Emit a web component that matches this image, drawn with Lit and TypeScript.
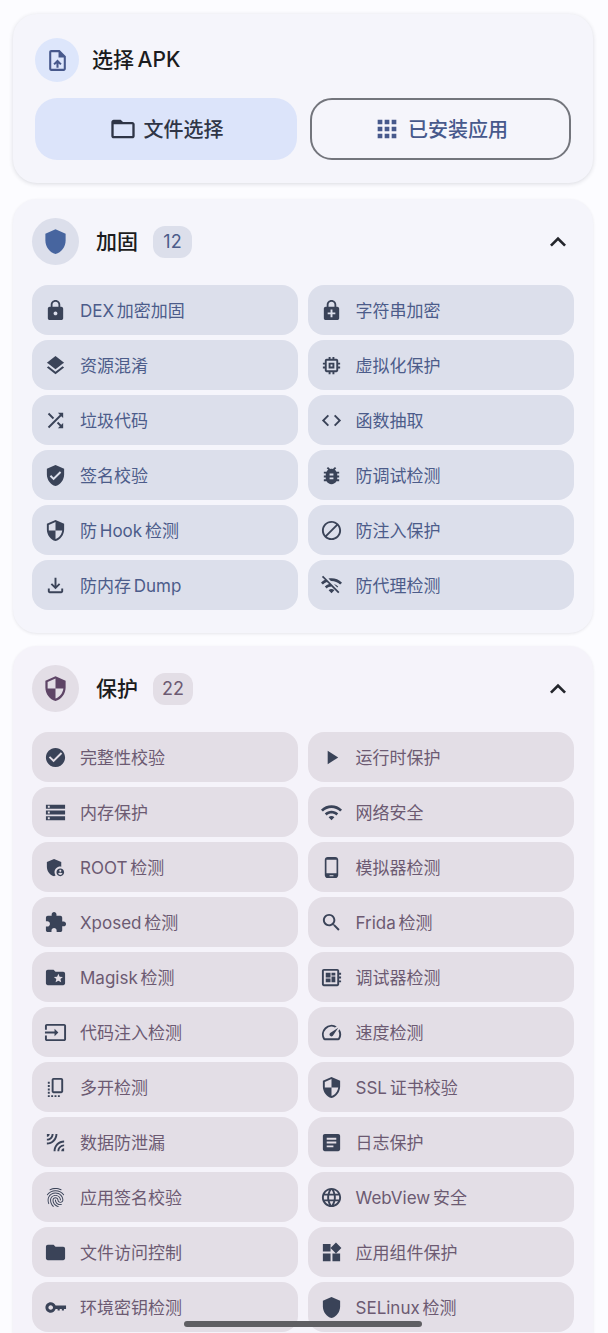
import { LitElement, html, css } from 'lit';
import { customElement } from 'lit/decorators.js';

const icons: Record<string, string> = {
  uploadFile: 'M14 2H6c-1.1 0-1.99.9-1.99 2L4 20c0 1.1.89 2 1.99 2H18c1.1 0 2-.9 2-2V8l-6-6zm4 18H6V4h7v5h5v11zM8 15.01l1.41 1.41L11 14.84V19h2v-4.16l1.59 1.59L16 15.01 12.01 11 8 15.01z',
  folderOpen: 'M20 6h-8l-2-2H4c-1.1 0-1.99.9-1.99 2L2 18c0 1.1.9 2 2 2h16c1.1 0 2-.9 2-2V8c0-1.1-.9-2-2-2zm0 12H4V8h16v10z',
  apps: 'M4 8h4V4H4v4zm6 12h4v-4h-4v4zm-6 0h4v-4H4v4zm0-6h4v-4H4v4zm6 0h4v-4h-4v4zm6-10v4h4V4h-4zm-6 4h4V4h-4v4zm6 6h4v-4h-4v4zm0 6h4v-4h-4v4z',
  shield: 'M12 1L3 5v6c0 5.55 3.84 10.74 9 12 5.16-1.26 9-6.45 9-12V5l-9-4z',
  security: 'M12 1L3 5v6c0 5.55 3.84 10.74 9 12 5.16-1.26 9-6.45 9-12V5l-9-4zm0 10.99h7c-.53 4.12-3.28 7.79-7 8.94V12H5V6.3l7-3.11v8.8z',
  expandLess: 'M12 8l-6 6 1.41 1.41L12 10.83l4.59 4.58L18 14z',
  lock: 'M18 8h-1V6c0-2.76-2.24-5-5-5S7 3.24 7 6v2H6c-1.1 0-2 .9-2 2v10c0 1.1.9 2 2 2h12c1.1 0 2-.9 2-2V10c0-1.1-.9-2-2-2zm-6 9c-1.1 0-2-.9-2-2s.9-2 2-2 2 .9 2 2-.9 2-2 2zm3.1-9H8.9V6c0-1.71 1.39-3.1 3.1-3.1 1.71 0 3.1 1.39 3.1 3.1v2z',
  encryption: 'M18 8h-1V6c0-2.76-2.24-5-5-5S7 3.24 7 6v2H6c-1.1 0-2 .9-2 2v10c0 1.1.9 2 2 2h12c1.1 0 2-.9 2-2V10c0-1.1-.9-2-2-2zM8.9 6c0-1.71 1.39-3.1 3.1-3.1s3.1 1.39 3.1 3.1v2H8.9V6zM16 16h-3v3h-2v-3H8v-2h3v-3h2v3h3v2z',
  layers: 'M11.99 18.54l-7.37-5.73L3 14.07l9 7 9-7-1.63-1.27-7.38 5.74zM12 16l7.36-5.73L21 9l-9-7-9 7 1.63 1.27L12 16z',
  memory: 'M15 9H9v6h6V9zm-2 4h-2v-2h2v2zm8-2V9h-2V7c0-1.1-.9-2-2-2h-2V3h-2v2h-2V3H9v2H7c-1.1 0-2 .9-2 2v2H3v2h2v2H3v2h2v2c0 1.1.9 2 2 2h2v2h2v-2h2v2h2v-2h2c1.1 0 2-.9 2-2v-2h2v-2h-2v-2h2zm-4 6H7V7h10v10z',
  shuffle: 'M10.59 9.17L5.41 4 4 5.41l5.17 5.17 1.42-1.41zM14.5 4l2.04 2.04L4 18.59 5.41 20 17.96 7.46 20 9.5V4h-5.5zm.33 9.41l-1.41 1.41 3.13 3.13L14.5 20H20v-5.5l-2.04 2.04-3.13-3.13z',
  code: 'M9.4 16.6L4.8 12l4.6-4.6L8 6l-6 6 6 6 1.4-1.4zm5.2 0l4.6-4.6-4.6-4.6L16 6l6 6-6 6-1.4-1.4z',
  verified: 'M12 1L3 5v6c0 5.55 3.84 10.74 9 12 5.16-1.26 9-6.45 9-12V5l-9-4zm-2 16l-4-4 1.41-1.41L10 14.17l6.59-6.59L18 9l-8 8z',
  bug: 'M20 8h-2.81c-.45-.78-1.07-1.45-1.82-1.96L17 4.41 15.59 3l-2.17 2.17C12.96 5.06 12.49 5 12 5c-.49 0-.96.06-1.41.17L8.41 3 7 4.41l1.62 1.63C7.88 6.55 7.26 7.22 6.81 8H4v2h2.09c-.05.33-.09.66-.09 1v1H4v2h2v1c0 .34.04.67.09 1H4v2h2.81c1.04 1.79 2.97 3 5.19 3s4.15-1.21 5.19-3H20v-2h-2.09c.05-.33.09-.66.09-1v-1h2v-2h-2v-1c0-.34-.04-.67-.09-1H20V8zm-6 8h-4v-2h4v2zm0-4h-4v-2h4v2z',
  block: 'M12 2C6.48 2 2 6.48 2 12s4.48 10 10 10 10-4.48 10-10S17.52 2 12 2zM4 12c0-4.42 3.58-8 8-8 1.85 0 3.55.63 4.9 1.69L5.69 16.9C4.63 15.55 4 13.85 4 12zm8 8c-1.85 0-3.55-.63-4.9-1.69L18.31 7.1C19.37 8.45 20 10.15 20 12c0 4.42-3.58 8-8 8z',
  download: 'M18 15v3H6v-3H4v3c0 1.1.9 2 2 2h12c1.1 0 2-.9 2-2v-3h-2zm-1-4l-1.41-1.41L13 12.17V4h-2v8.17L8.41 9.59 7 11l5 5 5-5z',
  wifiOff: 'M22.99 9C19.15 5.16 13.8 3.76 8.84 4.78l2.52 2.52c3.47-.17 6.99 1.05 9.64 3.7l2-2zm-4 4c-1.29-1.29-2.84-2.13-4.49-2.56l3.53 3.53.96-.97zM2 3.05L5.07 6.1C3.6 6.82 2.22 7.78 1 9l1.99 2c1.24-1.24 2.67-2.16 4.2-2.77l2.24 2.24C7.81 10.89 6.27 11.73 5 13v.01L6.99 15c1.36-1.36 3.14-2.04 4.92-2.06L18.98 20l1.27-1.26L3.29 1.79 2 3.05zM9 17l3 3 3-3c-1.65-1.66-4.34-1.66-6 0z',
  checkCircle: 'M12 2C6.48 2 2 6.48 2 12s4.48 10 10 10 10-4.48 10-10S17.52 2 12 2zm-2 15l-5-5 1.41-1.41L10 14.17l7.59-7.59L19 8l-9 9z',
  play: 'M8 5v14l11-7z',
  storage: 'M2 20h20v-4H2v4zm2-3h2v2H4v-2zM2 4v4h20V4H2zm4 3H4V5h2v2zm-4 7h20v-4H2v4zm2-3h2v2H4v-2z',
  wifi: 'M1 9l2 2c4.97-4.97 13.03-4.97 18 0l2-2C16.93 2.93 7.08 2.93 1 9zm8 8l3 3 3-3c-1.65-1.66-4.34-1.66-6 0zm-4-4l2 2c2.76-2.76 7.24-2.76 10 0l2-2C15.14 9.14 8.87 9.14 5 13z',
  admin: 'M17 11c.34 0 .67.04 1 .09V6.27L10.5 3 3 6.27v4.91c0 4.54 3.2 8.79 7.5 9.82.55-.13 1.08-.32 1.6-.55-.69-.98-1.1-2.17-1.1-3.45 0-3.31 2.69-6 6-6zM17 13c-2.21 0-4 1.79-4 4s1.79 4 4 4 4-1.79 4-4-1.79-4-4-4zm0 1.38c.62 0 1.12.51 1.12 1.12s-.51 1.12-1.12 1.12-1.12-.51-1.12-1.12.5-1.12 1.12-1.12zm0 5.37c-.93 0-1.74-.46-2.24-1.17.05-.72 1.51-1.08 2.24-1.08s2.19.36 2.24 1.08c-.5.71-1.31 1.17-2.24 1.17z',
  phone: 'M16 1H8C6.34 1 5 2.34 5 4v16c0 1.66 1.34 3 3 3h8c1.66 0 3-1.34 3-3V4c0-1.66-1.34-3-3-3zm-2 20h-4v-1h4v1zm3.25-3H6.75V4h10.5v14z',
  extension: 'M20.5 11H19V7c0-1.1-.9-2-2-2h-4V3.5C13 2.12 11.88 1 10.5 1S8 2.12 8 3.5V5H4c-1.1 0-1.99.9-1.99 2v3.8H3.5c1.49 0 2.7 1.21 2.7 2.7s-1.21 2.7-2.7 2.7H2V20c0 1.1.9 2 2 2h3.8v-1.5c0-1.49 1.21-2.7 2.7-2.7 1.49 0 2.7 1.21 2.7 2.7V22H17c1.1 0 2-.9 2-2v-4h1.5c1.38 0 2.5-1.12 2.5-2.5S21.88 11 20.5 11z',
  search: 'M15.5 14h-.79l-.28-.27C15.41 12.59 16 11.11 16 9.5 16 5.91 13.09 3 9.5 3S3 5.91 3 9.5 5.91 16 9.5 16c1.61 0 3.09-.59 4.23-1.57l.27.28v.79l5 4.99L20.49 19l-4.99-5zm-6 0C7.01 14 5 11.99 5 9.5S7.01 5 9.5 5 14 7.01 14 9.5 11.99 14 9.5 14z',
  folderSpecial: 'M20 6h-8l-2-2H4c-1.1 0-1.99.9-1.99 2L2 18c0 1.1.9 2 2 2h16c1.1 0 2-.9 2-2V8c0-1.1-.9-2-2-2zm-2.06 11L15 15.28 12.06 17l.78-3.33-2.59-2.24 3.41-.29L15 8l1.34 3.14 3.41.29-2.59 2.24.78 3.33z',
  board: 'M22 9V7h-2V5c0-1.1-.9-2-2-2H4c-1.1 0-2 .9-2 2v14c0 1.1.9 2 2 2h14c1.1 0 2-.9 2-2v-2h2v-2h-2v-2h2v-2h-2V9h2zm-4 10H4V5h14v14zM6 13h5v4H6zm6-6h4v3h-4zM6 7h5v5H6zm6 4h4v6h-4z',
  input: 'M21 3.01H3c-1.1 0-2 .9-2 2V9h2V4.99h18v14.03H3V15H1v4.01c0 1.1.9 1.98 2 1.98h18c1.1 0 2-.88 2-1.98v-14c0-1.11-.9-2-2-2zM11 16l4-4-4-4v3H1v2h10v3z',
  speed: 'M20.38 8.57l-1.23 1.85a8 8 0 0 1-.22 7.58H5.07A8 8 0 0 1 15.58 6.85l1.85-1.23A10 10 0 0 0 3.35 19a2 2 0 0 0 1.72 1h13.85a2 2 0 0 0 1.74-1 10 10 0 0 0-.27-10.44zm-9.79 6.84a2 2 0 0 0 2.83 0l5.66-8.49-8.49 5.66a2 2 0 0 0 0 2.83z',
  // portrait frame with a dotted edge left and below
  multi: 'M10 2h8c1.1 0 2 .9 2 2v12c0 1.1-.9 2-2 2h-8c-1.1 0-2-.9-2-2V4c0-1.1.9-2 2-2zm0 2v12h8V4h-8zM4 6h2v2H4zm0 3.5h2v2H4zm0 3.5h2v2H4zm0 3.5h2v2H4zM4 20h2v2H4zm3.5 0h2v2h-2zm3.5 0h2v2h-2zm3.5 0h2v2h-2z',
  leak: 'M6 3H3v3c1.66 0 3-1.34 3-3zm8 0h-2c0 4.97-4.03 9-9 9v2c6.08 0 11-4.93 11-11zm-4 0H8c0 2.76-2.24 5-5 5v2c3.87 0 7-3.13 7-7zm0 18h2c0-4.97 4.03-9 9-9v-2c-6.07 0-11 4.93-11 11zm8 0h3v-3c-1.66 0-3 1.34-3 3zm-4 0h2c0-2.76 2.24-5 5-5v-2c-3.87 0-7 3.13-7 7z',
  article: 'M19 3H5c-1.1 0-2 .9-2 2v14c0 1.1.9 2 2 2h14c1.1 0 2-.9 2-2V5c0-1.1-.9-2-2-2zm-5 14H7v-2h7v2zm3-4H7v-2h10v2zm0-4H7V7h10v2z',
  fingerprint: 'M17.81 4.47c-.08 0-.16-.02-.23-.06C15.66 3.42 14 3 12.01 3c-1.98 0-3.86.47-5.57 1.41-.24.13-.54.04-.68-.2-.13-.24-.04-.55.2-.68C7.82 2.52 9.86 2 12.01 2c2.13 0 3.99.47 6.03 1.52.25.13.34.43.21.67-.09.18-.26.28-.44.28zM3.5 9.72c-.1 0-.2-.03-.29-.09-.23-.16-.28-.47-.12-.7.99-1.4 2.25-2.5 3.75-3.27C9.98 4.04 14 4.03 17.15 5.65c1.5.77 2.76 1.86 3.75 3.25.16.22.11.54-.12.7-.23.16-.54.11-.7-.12-.9-1.26-2.04-2.25-3.39-2.94-2.87-1.47-6.54-1.47-9.4.01-1.36.7-2.5 1.7-3.4 2.96-.08.14-.23.21-.39.21zm6.25 12.07c-.13 0-.26-.05-.35-.15-.87-.87-1.34-1.43-2.01-2.64-.69-1.23-1.05-2.73-1.05-4.34 0-2.97 2.54-5.39 5.66-5.39s5.66 2.42 5.66 5.39c0 .28-.22.5-.5.5s-.5-.22-.5-.5c0-2.42-2.09-4.39-4.66-4.39-2.57 0-4.66 1.97-4.66 4.39 0 1.44.32 2.77.93 3.85.64 1.15 1.08 1.64 1.85 2.42.19.2.19.51 0 .71-.11.1-.24.15-.37.15zm7.17-1.85c-1.19 0-2.24-.3-3.1-.89-1.49-1.01-2.38-2.65-2.38-4.39 0-.28.22-.5.5-.5s.5.22.5.5c0 1.41.72 2.74 1.94 3.56.71.48 1.54.71 2.54.71.24 0 .64-.03 1.04-.1.27-.05.53.13.58.41.05.27-.13.53-.41.58-.57.11-1.07.12-1.21.12zM14.91 22c-.04 0-.09-.01-.13-.02-1.59-.44-2.63-1.03-3.72-2.1-1.4-1.39-2.17-3.24-2.17-5.22 0-1.62 1.38-2.94 3.08-2.94 1.7 0 3.08 1.32 3.08 2.94 0 1.07.93 1.94 2.08 1.94s2.08-.87 2.08-1.94c0-3.77-3.25-6.83-7.25-6.83-2.84 0-5.44 1.58-6.61 4.03-.39.81-.59 1.76-.59 2.8 0 .78.07 2.01.67 3.61.1.26-.03.55-.29.64-.26.1-.55-.04-.64-.29-.49-1.31-.73-2.61-.73-3.96 0-1.2.23-2.29.68-3.24 1.33-2.79 4.28-4.6 7.51-4.6 4.55 0 8.25 3.51 8.25 7.83 0 1.62-1.38 2.94-3.08 2.94s-3.08-1.32-3.08-2.94c0-1.07-.93-1.94-2.08-1.94s-2.08.87-2.08 1.94c0 1.71.66 3.31 1.87 4.51.95.94 1.86 1.46 3.27 1.85.27.07.42.35.35.61-.05.23-.26.38-.47.38z',
  language: 'M11.99 2C6.47 2 2 6.48 2 12s4.47 10 9.99 10C17.52 22 22 17.52 22 12S17.52 2 11.99 2zm6.93 6h-2.95c-.32-1.25-.78-2.45-1.38-3.56 1.84.63 3.37 1.91 4.33 3.56zM12 4.04c.83 1.2 1.48 2.53 1.91 3.96h-3.82c.43-1.43 1.08-2.76 1.91-3.96zM4.26 14C4.1 13.36 4 12.69 4 12s.1-1.36.26-2h3.38c-.08.66-.14 1.32-.14 2 0 .68.06 1.34.14 2H4.26zm.82 2h2.95c.32 1.25.78 2.45 1.38 3.56-1.84-.63-3.37-1.9-4.33-3.56zm2.95-8H5.08c.96-1.66 2.49-2.93 4.33-3.56C8.81 5.55 8.35 6.75 8.03 8zM12 19.96c-.83-1.2-1.48-2.53-1.91-3.96h3.82c-.43 1.43-1.08 2.76-1.91 3.96zM14.34 14H9.66c-.09-.66-.16-1.32-.16-2 0-.68.07-1.35.16-2h4.68c.09.65.16 1.32.16 2 0 .68-.07 1.34-.16 2zm.25 5.56c.6-1.11 1.06-2.31 1.38-3.56h2.95c-.96 1.65-2.49 2.93-4.33 3.56zM16.36 14c.08-.66.14-1.32.14-2 0-.68-.06-1.34-.14-2h3.38c.16.64.26 1.31.26 2s-.1 1.36-.26 2h-3.38z',
  folder: 'M10 4H4c-1.1 0-1.99.9-1.99 2L2 18c0 1.1.9 2 2 2h16c1.1 0 2-.9 2-2V8c0-1.1-.9-2-2-2h-8l-2-2z',
  widgets: 'M13 13v8h8v-8h-8zM3 21h8v-8H3v8zM3 3v8h8V3H3zm13.66-1.31L11 7.34 16.66 13l5.66-5.66-5.66-5.65z',
  // open ring with a thin shaft, slimmer than vpn_key
  key: 'M7 6.5c2.4 0 4.4 1.5 5.1 3.5H23v3.6h-2.2V15h-2.2v-1.4h-2.2V15h-2.2v-1.4h-2.1c-.8 2.2-2.8 3.9-5.1 3.9-3 0-5.5-2.5-5.5-5.5S4 6.500 7 6.500zm0 3.1c-1.3 0-2.400 1.100-2.400 2.400s1.100 2.400 2.400 2.400 2.400-1.100 2.400-2.400-1.100-2.400-2.400-2.400z',
};

const hardening: [string, string][] = [
  ['lock', 'DEX 加密加固'], ['encryption', '字符串加密'],
  ['layers', '资源混淆'], ['memory', '虚拟化保护'],
  ['shuffle', '垃圾代码'], ['code', '函数抽取'],
  ['verified', '签名校验'], ['bug', '防调试检测'],
  ['security', '防 Hook 检测'], ['block', '防注入保护'],
  ['download', '防内存 Dump'], ['wifiOff', '防代理检测'],
];

const protection: [string, string][] = [
  ['checkCircle', '完整性校验'], ['play', '运行时保护'],
  ['storage', '内存保护'], ['wifi', '网络安全'],
  ['admin', 'ROOT 检测'], ['phone', '模拟器检测'],
  ['extension', 'Xposed 检测'], ['search', 'Frida 检测'],
  ['folderSpecial', 'Magisk 检测'], ['board', '调试器检测'],
  ['input', '代码注入检测'], ['speed', '速度检测'],
  ['multi', '多开检测'], ['security', 'SSL 证书校验'],
  ['leak', '数据防泄漏'], ['article', '日志保护'],
  ['fingerprint', '应用签名校验'], ['language', 'WebView 安全'],
  ['folder', '文件访问控制'], ['widgets', '应用组件保护'],
  ['key', '环境密钥检测'], ['shield', 'SELinux 检测'],
];

const icon = (name: string) => html`<svg viewBox="0 0 24 24"><path d=${icons[name]}></path></svg>`;

@customElement('app-root')
export class AppRoot extends LitElement {
  static styles = css`
    :host {
      display: block;
      position: relative;
      height: 1333px;
      overflow: hidden;
      box-sizing: border-box;
      padding: 14px 15px 0 13px;
      background: #fcfcff;
      font-family: Inter, 'Noto Sans CJK SC', sans-serif;
      word-spacing: -2px;
      color: #1b1c20;
    }

    svg {
      display: block;
      width: 24px;
      height: 24px;
      fill: currentColor;
      flex: none;
    }

    .card {
      background: #f5f5fb;
      border-radius: 24px;
      box-shadow: 0 1px 4px rgba(40, 44, 60, 0.16);
    }

    .pick {
      padding: 24px 22px 23px;
      margin-bottom: 16px;
    }

    .pick-head {
      display: flex;
      align-items: center;
      gap: 13px;
      margin-bottom: 16px;
    }

    .pick-icon {
      width: 44px;
      height: 44px;
      border-radius: 50%;
      background: #dde6fb;
      color: #47598c;
      display: flex;
      align-items: center;
      justify-content: center;
    }

    .pick-icon svg {
      width: 25px;
      height: 25px;
    }

    .title {
      font-size: 21px;
      font-weight: 500;
      line-height: 28px;
    }

    .buttons {
      display: grid;
      grid-template-columns: 262px 261px;
      gap: 13px;
    }

    .btn {
      height: 62px;
      box-sizing: border-box;
      border-radius: 22px;
      display: flex;
      align-items: center;
      justify-content: center;
      gap: 7px;
      font-size: 20px;
      font-weight: 500;
    }

    .btn span {
      padding-bottom: 2px;
    }

    .btn svg {
      width: 28px;
      height: 28px;
    }

    .btn.primary {
      background: #dce4fa;
      color: #2f3546;
    }

    .btn.outline {
      border: 2px solid #73757c;
      color: #47598c;
    }

    .section {
      padding: 19px 19px 23px;
      margin-bottom: 13px;
      box-shadow: 0 1px 3px rgba(40, 44, 60, 0.1);
    }

    .section.rose {
      background: #f5f3fa;
    }

    .section-head {
      display: flex;
      align-items: center;
      height: 47px;
      margin-bottom: 20px;
    }

    .section-icon {
      width: 47px;
      height: 47px;
      border-radius: 50%;
      display: flex;
      align-items: center;
      justify-content: center;
      margin-right: 17px;
    }

    .section-icon svg {
      width: 27px;
      height: 27px;
    }

    .count {
      margin-left: 15px;
      height: 32px;
      min-width: 39px;
      padding: 0 9px;
      box-sizing: border-box;
      border-radius: 12px;
      display: flex;
      align-items: center;
      justify-content: center;
      font-size: 18px;
    }

    .chevron {
      margin-left: auto;
      color: #23252b;
    }

    .chevron svg {
      width: 32px;
      height: 32px;
    }

    .chips {
      display: grid;
      grid-template-columns: 265.5px 266.5px;
      gap: 5px 10px;
    }

    .chip {
      height: 50px;
      border-radius: 16px;
      display: flex;
      align-items: center;
      gap: 13px;
      padding-left: 12px;
      font-size: 17px;
      white-space: nowrap;
    }

    .chip span {
      padding-bottom: 2px;
    }

    .chip svg {
      width: 23px;
      height: 23px;
      color: #3a4358;
    }

    .blue .section-icon,
    .blue .count,
    .blue .chip {
      background: #dcdfeb;
    }

    .blue .section-icon svg {
      color: #47659f;
    }

    .blue .count,
    .blue .chip {
      color: #4c5c8a;
    }

    .rose .section-icon,
    .rose .count,
    .rose .chip {
      background: #e3dee6;
    }

    .rose .section-icon svg {
      color: #5e4566;
    }

    .rose .count,
    .rose .chip {
      color: #6c5a72;
    }

    .home-bar {
      position: absolute;
      left: 184px;
      bottom: 6px;
      width: 238px;
      height: 6px;
      border-radius: 3px;
      background: #5f5f63;
    }
  `;

  renderSection(kind: string, iconName: string, title: string, items: [string, string][]) {
    return html`
      <section class="card section ${kind}">
        <div class="section-head">
          <div class="section-icon">${icon(iconName)}</div>
          <div class="title">${title}</div>
          <div class="count">${items.length}</div>
          <div class="chevron">${icon('expandLess')}</div>
        </div>
        <div class="chips">
          ${items.map(([name, label]) => html`<div class="chip">${icon(name)}<span>${label}</span></div>`)}
        </div>
      </section>
    `;
  }

  render() {
    return html`
      <section class="card pick">
        <div class="pick-head">
          <div class="pick-icon">${icon('uploadFile')}</div>
          <div class="title">选择 APK</div>
        </div>
        <div class="buttons">
          <div class="btn primary">${icon('folderOpen')}<span>文件选择</span></div>
          <div class="btn outline">${icon('apps')}<span>已安装应用</span></div>
        </div>
      </section>
      ${this.renderSection('blue', 'shield', '加固', hardening)}
      ${this.renderSection('rose', 'security', '保护', protection)}
      <div class="home-bar"></div>
    `;
  }
}
